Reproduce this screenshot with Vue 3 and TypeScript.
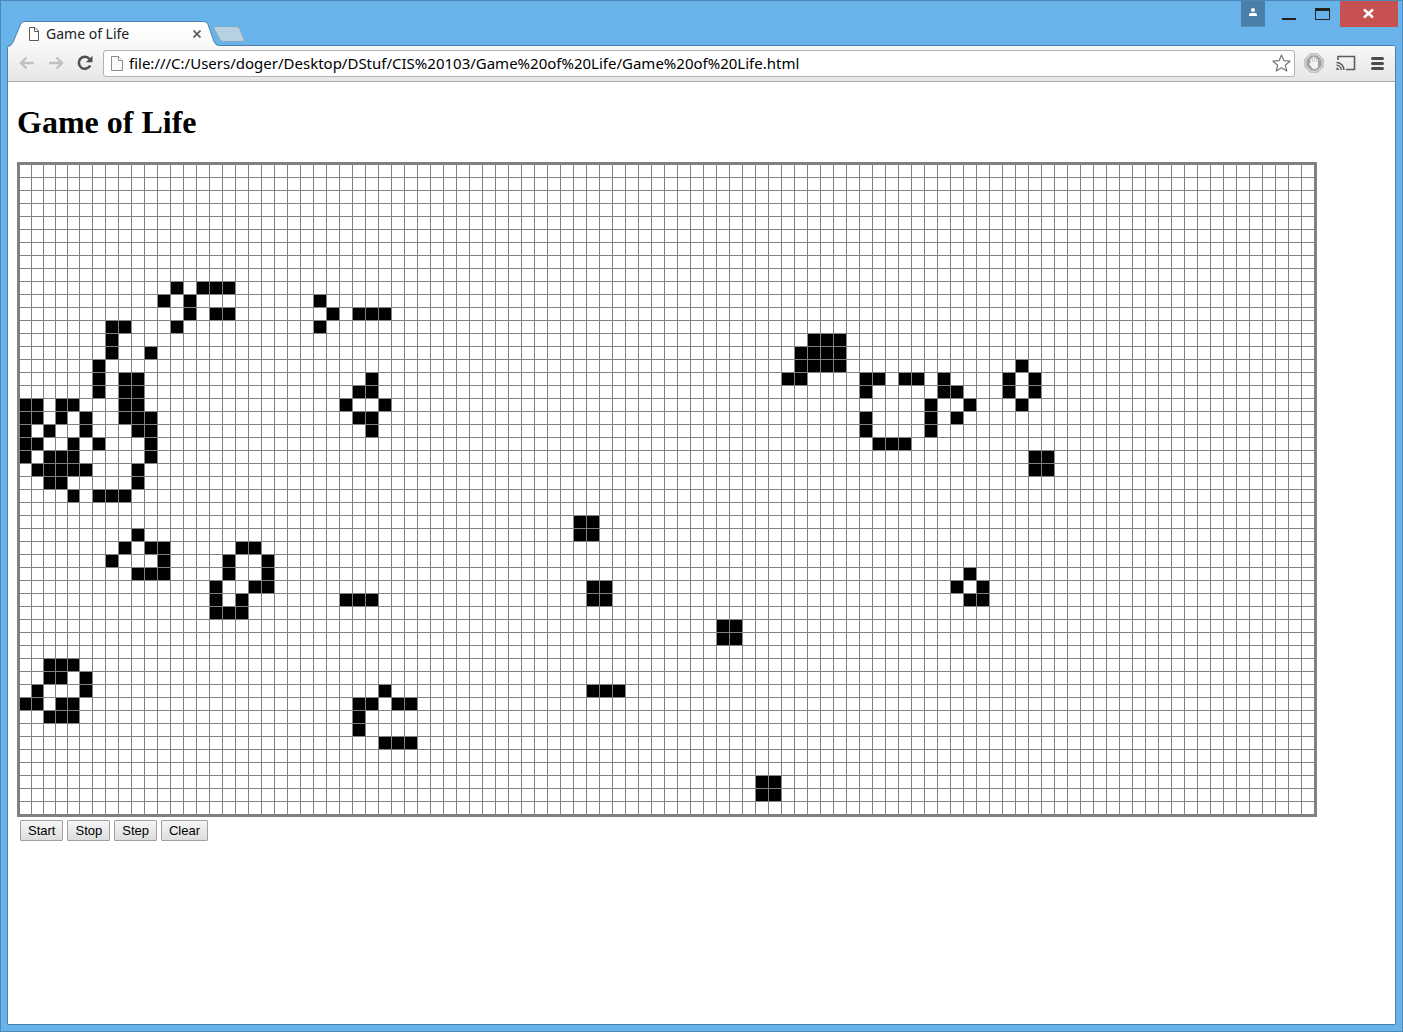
<script setup lang="ts">
import { onBeforeUnmount, ref } from 'vue'

const ROWS = 50
const COLS = 100

// Live columns, keyed by row
const seed: Record<number, number[]> = {
  9: [12, 14, 15, 16],
  10: [11, 13, 23],
  11: [13, 15, 16, 24, 26, 27, 28],
  12: [7, 8, 12, 23],
  13: [7, 61, 62, 63],
  14: [7, 10, 60, 61, 62, 63],
  15: [6, 60, 61, 62, 63, 77],
  16: [6, 8, 9, 27, 59, 60, 65, 66, 68, 69, 71, 76, 78],
  17: [6, 8, 9, 26, 27, 65, 71, 72, 76, 78],
  18: [0, 1, 3, 4, 8, 9, 25, 28, 70, 73, 77],
  19: [0, 1, 3, 5, 8, 9, 10, 26, 27, 65, 70, 72],
  20: [0, 2, 5, 9, 10, 27, 65, 70],
  21: [0, 1, 4, 6, 10, 66, 67, 68],
  22: [0, 2, 3, 4, 10, 78, 79],
  23: [1, 2, 3, 4, 5, 9, 78, 79],
  24: [2, 3, 9],
  25: [4, 6, 7, 8],
  27: [43, 44],
  28: [9, 43, 44],
  29: [8, 10, 11, 17, 18],
  30: [7, 11, 16, 19],
  31: [9, 10, 11, 16, 19, 73],
  32: [15, 18, 19, 44, 45, 72, 74],
  33: [15, 17, 25, 26, 27, 44, 45, 73, 74],
  34: [15, 16, 17],
  35: [54, 55],
  36: [54, 55],
  38: [2, 3, 4],
  39: [2, 3, 5],
  40: [1, 5, 28, 44, 45, 46],
  41: [0, 1, 3, 4, 26, 27, 29, 30],
  42: [2, 3, 4, 26],
  43: [26],
  44: [28, 29, 30],
  47: [57, 58],
  48: [57, 58],
}

function build(alive: (r: number, c: number) => boolean): boolean[][] {
  return Array.from({ length: ROWS }, (_, r) =>
    Array.from({ length: COLS }, (_, c) => alive(r, c)),
  )
}

const grid = ref<boolean[][]>(build((r, c) => seed[r]?.includes(c) ?? false))
const address = ref('file:///C:/Users/doger/Desktop/DStuf/CIS%20103/Game%20of%20Life/Game%20of%20Life.html')
let timer: number | undefined

function neighbours(r: number, c: number): number {
  let n = 0
  for (let y = r - 1; y <= r + 1; y++) {
    for (let x = c - 1; x <= c + 1; x++) {
      if ((y !== r || x !== c) && grid.value[y]?.[x]) n++
    }
  }
  return n
}

function step() {
  grid.value = build((r, c) => {
    const n = neighbours(r, c)
    return n === 3 || (n === 2 && grid.value[r][c])
  })
}

function stop() {
  window.clearInterval(timer)
  timer = undefined
}

function start() {
  if (timer === undefined) timer = window.setInterval(step, 200)
}

function clear() {
  stop()
  grid.value = build(() => false)
}

function toggle(r: number, c: number) {
  grid.value[r][c] = !grid.value[r][c]
}

onBeforeUnmount(stop)
</script>

<template>
  <div class="window">
    <header class="titlebar">
      <div class="tab">
        <svg class="tab-shape" width="240" height="26" viewBox="0 0 240 26" aria-hidden="true">
          <defs>
            <linearGradient id="tabFill" x1="0" y1="0" x2="0" y2="1">
              <stop offset="0" stop-color="#ffffff" />
              <stop offset="1" stop-color="#f8f8f8" />
            </linearGradient>
          </defs>
          <path d="M1 26V25.500C4 24.500 5 23.500 6.500 20L13.500 3.500Q14.500 .5 18 .5H196.500Q200 .5 201 3.500L207 20.500Q208.500 24.500 212 24.500V26Z" fill="url(#tabFill)" />
          <path d="M1 25.500C4 24.500 5 23.500 6.500 20L13.500 3.500Q14.500 .5 18 .5H196.500Q200 .5 201 3.500L207 20.500Q208.500 24.500 212 24.500" fill="none" stroke="#4a81ac" />
          <path d="M208.500 5.500H229Q232 5.500 233 8.500L237 18.500Q238 20.500 235 20.500H216.500Q213.500 20.500 212.500 18L207 7.500Q206 5.500 208.500 5.500Z" fill="#b7d0e2" stroke="#7fa9c8" />
        </svg>
        <svg class="tab-doc" width="12" height="14" viewBox="0 0 12 14" aria-hidden="true">
          <path d="M1.500 .5H7L10.500 4V13.500H1.500Z" fill="#fff" stroke="#5a5a5a" />
          <path d="M6.500 1V4.500H10.500" fill="none" stroke="#5a5a5a" />
        </svg>
        <span class="tab-title">Game of Life</span>
        <button class="tab-close" type="button" aria-label="Close tab">
          <svg width="8" height="8" viewBox="0 0 8 8"><path d="M.5 .5L7.500 7.500M7.500 .5L.5 7.500" stroke="#5f5f5f" stroke-width="1.800" /></svg>
        </button>
      </div>
      <div class="controls">
        <button class="user" type="button" aria-label="Profile">
          <svg width="24" height="25" viewBox="0 0 24 25"><circle cx="12" cy="9" r="2" fill="#fff" /><path d="M8 15V13.500Q8 12 10 12H14Q16 12 16 13.500V15Z" fill="#fff" /></svg>
        </button>
        <button type="button" aria-label="Minimize">
          <svg width="46" height="26" viewBox="0 0 46 26"><path d="M17 17H31V19H17Z" fill="#222" /></svg>
        </button>
        <button type="button" aria-label="Maximize">
          <svg width="29" height="26" viewBox="0 0 29 26"><path d="M4.500 7.500H18.500V18.500H4.500Z" fill="none" stroke="#222" /><path d="M4 7H19V10H4Z" fill="#222" /></svg>
        </button>
        <button class="close" type="button" aria-label="Close">
          <svg width="58" height="26" viewBox="0 0 58 26"><path d="M24 8.500L33 16.500M33 8.500L24 16.500" stroke="#fff" stroke-width="2.400" /></svg>
        </button>
      </div>
    </header>

    <div class="body">
      <nav class="toolbar">
        <button type="button" aria-label="Back">
          <svg width="16" height="14" viewBox="0 0 16 14"><path d="M15 7H2M7.500 1.500L2 7L7.500 12.500" fill="none" stroke="#c0c0c0" stroke-width="2.400" /></svg>
        </button>
        <button type="button" aria-label="Forward">
          <svg width="16" height="14" viewBox="0 0 16 14"><path d="M1 7H14M8.500 1.500L14 7L8.500 12.500" fill="none" stroke="#c0c0c0" stroke-width="2.400" /></svg>
        </button>
        <button type="button" aria-label="Reload">
          <svg width="16" height="16" viewBox="0 0 16 16"><path d="M13.200 10.500A6 6 0 1 1 12.500 4" fill="none" stroke="#505050" stroke-width="2.600" /><path d="M15.500 .8V7.300H8.800Z" fill="#505050" /></svg>
        </button>
        <div class="omnibox">
          <svg width="12" height="15" viewBox="0 0 12 15" aria-hidden="true">
            <path d="M.5 .5H7.500L11.500 4.500V14.500H.5Z" fill="#fafafa" stroke="#8c8c8c" />
            <path d="M7.500 .5V4.500H11.500" fill="#fff" stroke="#8c8c8c" />
          </svg>
          <input v-model="address" type="text" aria-label="Address" spellcheck="false" />
          <button type="button" aria-label="Bookmark this page">
            <svg width="19" height="18" viewBox="0 0 19 18"><path d="M9.500 1L11.900 6.700L18 7.200L13.300 11.200L14.800 17L9.500 13.800L4.200 17L5.700 11.200L1 7.200L7.100 6.700Z" fill="#fff" stroke="#777" stroke-width="1.200" stroke-linejoin="round" /></svg>
          </button>
        </div>
        <div class="actions">
          <button type="button" aria-label="Ad blocker">
            <svg width="20" height="20" viewBox="0 0 20 20">
              <path d="M6.200 .8H13.800L19.200 6.200V13.800L13.800 19.200H6.200L.8 13.800V6.200Z" fill="#d8d8d8" stroke="#b4b4b4" />
              <path d="M6.900 2.500H13.100L17.500 6.900V13.100L13.100 17.500H6.900L2.500 13.100V6.900Z" fill="#a2a2a2" />
              <path d="M7.200 10V6M9.200 9.500V4.500M11.200 9.500V4.800M13.200 10.500V6.500" stroke="#f4f4f4" stroke-width="1.500" stroke-linecap="round" />
              <path d="M6.500 9H14V12.500Q14 16 10.500 16Q8.200 16 7 13.500L5 10.800Q5.500 9.800 6.500 11Z" fill="#f4f4f4" />
            </svg>
          </button>
          <button type="button" aria-label="Cast">
            <svg width="20" height="16" viewBox="0 0 20 16">
              <path d="M2 5V1.500H18.500V14.500H10" fill="none" stroke="#5c5c5c" stroke-width="1.600" />
              <path d="M.5 7.500A7.500 7.500 0 0 1 8 15M.5 10.300A4.700 4.700 0 0 1 5.200 15" fill="none" stroke="#5c5c5c" stroke-width="1.500" />
              <path d="M.5 12.500A2.500 2.500 0 0 1 3 15H.5Z" fill="#5c5c5c" />
            </svg>
          </button>
          <button class="menu" type="button" aria-label="Menu">
            <svg width="13" height="13" viewBox="0 0 13 13"><path d="M1.500 1.500H11.500M1.500 6.500H11.500M1.500 11.500H11.500" stroke="#4c4c4c" stroke-width="3" stroke-linecap="round" /></svg>
          </button>
        </div>
      </nav>

      <main class="page">
        <h1>Game of Life</h1>
        <table class="board" aria-label="Cells">
          <colgroup>
            <col class="narrow" span="5" />
            <col class="regular" span="94" />
            <col class="narrow" />
          </colgroup>
          <tbody>
            <tr v-for="(row, r) in grid" :key="r">
              <td v-for="(alive, c) in row" :key="c" :class="{ alive }" @click="toggle(r, c)"></td>
            </tr>
          </tbody>
        </table>
        <div class="commands">
          <button type="button" @click="start">Start</button>
          <button type="button" @click="stop">Stop</button>
          <button type="button" @click="step">Step</button>
          <button type="button" @click="clear">Clear</button>
        </div>
      </main>
    </div>
  </div>
</template>

<style>
body {
  background: #69b3eb;
}
</style>

<style scoped>
.window {
  box-sizing: border-box;
  display: flex;
  flex-direction: column;
  min-height: 100vh;
  padding: 0 6px 6px;
  border: 1px solid #4b88b8;
  background: #69b3eb;
  font-family: "Noto Sans", "Open Sans", sans-serif;
}

button {
  padding: 0;
  border: 0;
  background: none;
}

svg {
  display: block;
  flex: none;
}

.titlebar {
  display: flex;
  justify-content: space-between;
  align-items: flex-start;
  height: 44px;
}

.tab {
  position: relative;
  z-index: 1;
  display: flex;
  align-items: center;
  box-sizing: border-box;
  width: 201px;
  height: 26px;
  margin-top: 20px;
  padding: 0 7px 0 21px;
}

.tab-shape {
  position: absolute;
  left: 0;
  top: 0;
}

.tab-doc,
.tab-title,
.tab-close {
  position: relative;
}

.tab-title {
  flex: 1;
  margin-left: 6px;
  font-size: 14px;
  line-height: 24px;
  color: #222;
}

.controls {
  display: flex;
  align-items: flex-start;
  margin-right: -2px;
}

.user {
  border-bottom: 1px solid #5690bd;
  background: #497fa8;
}

.close {
  background: #c75050;
}

.body {
  display: flex;
  flex: 1;
  flex-direction: column;
  border: 1px solid #4a81ac;
  border-radius: 3px 3px 1px 1px;
  background: #fff;
}

.toolbar {
  display: flex;
  align-items: center;
  gap: 13px;
  box-sizing: border-box;
  height: 36px;
  padding: 0 11px 1px;
  border-bottom: 1px solid #a8a8a8;
  border-radius: 2px 2px 0 0;
  background: linear-gradient(#f8f8f8, #e6e6e6);
}

.omnibox {
  display: flex;
  flex: 1;
  align-items: center;
  box-sizing: border-box;
  min-width: 0;
  height: 27px;
  margin-left: -3px;
  padding: 0 3px 0 7px;
  border: 1px solid #b2b2b2;
  border-radius: 3px;
  background: #fff;
}

.omnibox input {
  flex: 1;
  min-width: 0;
  height: 24px;
  padding: 0 6px;
  border: 0;
  outline: 0;
  background: transparent;
  color: #000;
  font: 15px/24px "Noto Sans", "Open Sans", sans-serif;
}

.actions {
  display: flex;
  align-items: center;
  gap: 12px;
  margin-left: -4px;
}

.menu {
  padding-left: 3px;
}

.page {
  flex: 1;
  padding: 22px 9px 9px;
}

h1 {
  margin: 0 0 21px;
  color: #000;
  font: bold 32px/37px "Liberation Serif", "Times New Roman", serif;
}

.board {
  table-layout: fixed;
  box-sizing: border-box;
  width: 1300px;
  border: 3px solid #808080;
  border-collapse: separate;
  border-spacing: 0;
}

.narrow {
  width: 12px;
}

.regular {
  width: 13px;
}

.board td {
  box-sizing: border-box;
  height: 13px;
  padding: 0;
  border: solid #808080;
  border-width: 0 1px 1px 0;
}

.board td:last-child {
  border-right: 0;
}

.board tr:last-child td {
  height: 12px;
  border-bottom: 0;
}

.board .alive {
  background: #000;
}

.commands {
  display: flex;
  gap: 4px;
  padding: 3px;
}

.commands button {
  height: 21px;
  padding: 0 7px;
  border: 1px solid #a0a0a0;
  border-radius: 1px;
  background: linear-gradient(#f6f6f6, #dddddd);
  color: #000;
  font: 13px/19px "Liberation Sans", Arial, sans-serif;
}
</style>
